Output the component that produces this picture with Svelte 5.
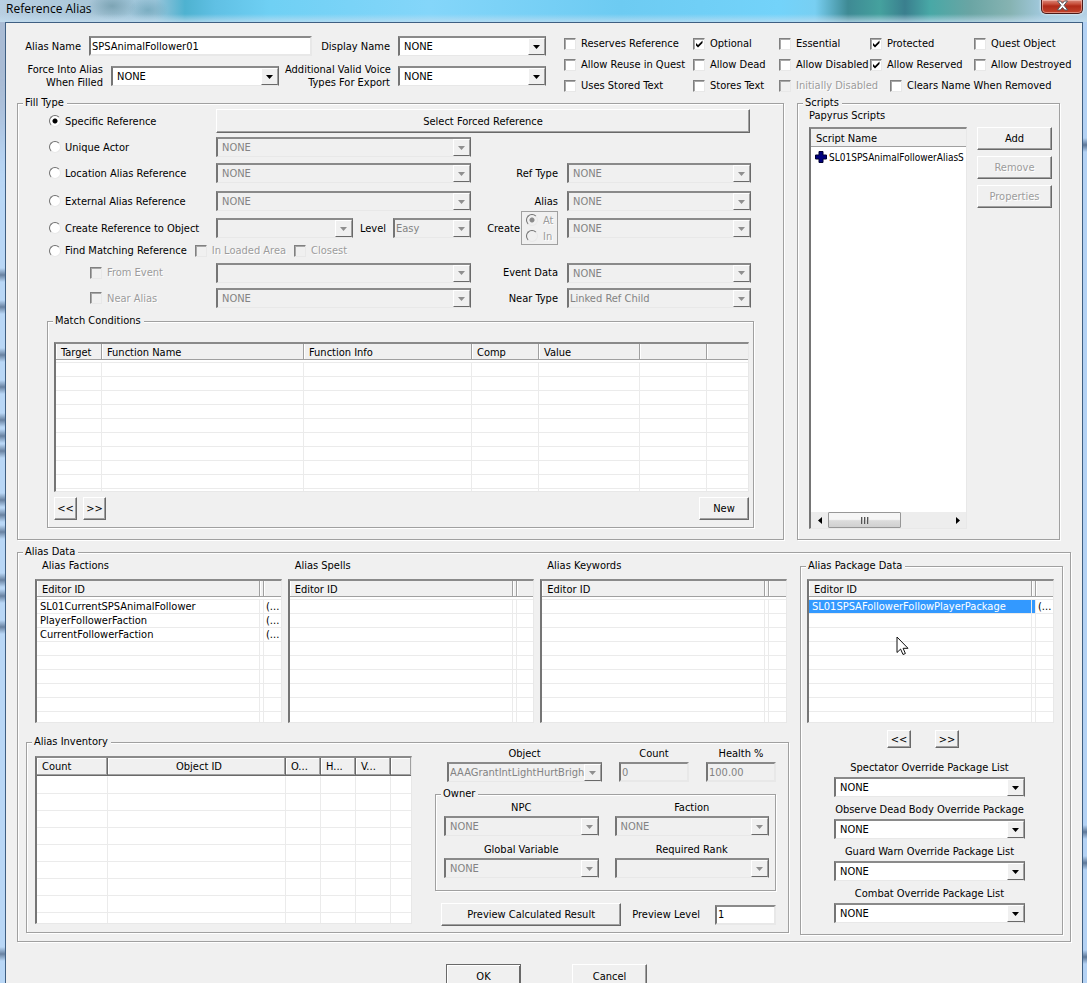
<script>
  const topChecks = [
    ['Reserves Reference', false], ['Optional', true], ['Essential', false], ['Protected', true], ['Quest Object', false],
    ['Allow Reuse in Quest', false], ['Allow Dead', false], ['Allow Disabled', false], ['Allow Reserved', true], ['Allow Destroyed', false],
    ['Uses Stored Text', false], ['Stores Text', false], ['Initially Disabled', false, true], ['Clears Name When Removed', false]
  ];

  const matchCols = [
    { w: 46, label: 'Target' }, { w: 202, label: 'Function Name' }, { w: 168, label: 'Function Info' },
    { w: 67, label: 'Comp' }, { w: 101, label: 'Value' }, { w: 67, label: '' }, { label: '' }
  ];
  const editorCols = [{ w: 223, label: 'Editor ID' }, { w: 4, label: '' }, { label: '' }];
  const inventoryCols = [
    { w: 71, label: 'Count' }, { w: 178, label: 'Object ID', center: true }, { w: 35, label: 'O...' },
    { w: 35, label: 'H...' }, { w: 35, label: 'V...' }, { label: '' }
  ];
  const factions = [
    ['SL01CurrentSPSAnimalFollower', '', '(...'],
    ['PlayerFollowerFaction', '', '(...'],
    ['CurrentFollowerFaction', '', '(...']
  ];
  const packages = [['SL01SPSAFollowerFollowPlayerPackage', '', '(...']];
  const overrides = [
    'Spectator Override Package List', 'Observe Dead Body Override Package',
    'Guard Warn Override Package List', 'Combat Override Package List'
  ];

  // Dark smudges showing through the glass frame, by distance from the title bar.
  function glass(spots) {
    return spots
      .map((y) => `linear-gradient(transparent ${y - 7}px, rgba(64,88,120,.75) ${y}px, transparent ${y + 7}px)`)
      .join(',');
  }
  const leftGlass = glass([253, 285, 333, 365, 398, 414, 429, 478, 493, 510, 558, 574, 605, 932]);
  const rightGlass = glass([123, 810, 841, 935]);

  let fill = $state('specific');
</script>

{#snippet combo(label, value, disabled = false, tight = false)}
  <span class="combo" class:disabled class:tight>
    <select aria-label={label} {disabled}><option>{value}</option></select>
    <span class="arrow"><svg width="7" height="4" viewBox="0 0 7 4"><path d="M0 0h7L3.5 4z" /></svg></span>
  </span>
{/snippet}

{#snippet check(label, checked = false, disabled = false)}
  <label class="check" class:disabled><input type="checkbox" {checked} {disabled} /><span>{label}</span></label>
{/snippet}

{#snippet option(value, label)}
  <label class="check radio"><input type="radio" name="fill" {value} bind:group={fill} /><span>{label}</span></label>
{/snippet}

{#snippet grid(name, cols, rows, count, selected = -1)}
  <table aria-label={name}>
    <colgroup>{#each cols as c}<col style={c.w ? `width:${c.w}px` : ''} />{/each}</colgroup>
    <thead><tr>{#each cols as c}<th class:center={c.center}><span>{c.label}</span></th>{/each}</tr></thead>
    <tbody>
      {#each Array(count) as _, r}
        <tr class:selected={r === selected}>{#each cols as _c, i}<td>{rows[r]?.[i] ?? ''}</td>{/each}</tr>
      {/each}
    </tbody>
  </table>
{/snippet}

<div class="window">
  <header>
    <h1>Reference Alias</h1>
    <button class="close" aria-label="Close">
      <svg width="13" height="11" viewBox="0 0 13 11"><path d="M1.5 1h3l2 2.300L8.500 1h3L8 5.300 11.700 10h-3L6.500 7.500 4.300 10h-3L5 5.300z" fill="#fff" stroke="#54595f" stroke-width="1" /></svg>
    </button>
  </header>
  <div class="edge left" style:background-image={leftGlass}></div>

  <main>
    <section class="top">
      <div class="names">
        <div class="row">
          <label class="w64" for="alias-name">Alias Name</label>
          <input id="alias-name" class="text grow" value="SPSAnimalFollower01" />
          <span class="cap w72">Display Name</span>
          <div class="w148">{@render combo('Display Name', 'NONE')}</div>
        </div>
        <div class="row">
          <span class="cap w86">Force Into Alias<br />When Filled</span>
          <div class="grow">{@render combo('Force Into Alias When Filled', 'NONE')}</div>
          <span class="cap w105">Additional Valid Voice<br />Types For Export</span>
          <div class="w148">{@render combo('Additional Valid Voice Types For Export', 'NONE')}</div>
        </div>
      </div>
      <div class="checks">
        {#each topChecks as [label, on, off]}{@render check(label, on, off)}{/each}
      </div>
    </section>

    <div class="upper">
      <fieldset>
        <legend>Fill Type</legend>
        <div class="fill">
          {@render option('specific', 'Specific Reference')}
          <button class="btn wide">Select Forced Reference</button>

          {@render option('unique', 'Unique Actor')}
          {@render combo('Unique Actor', 'NONE', true)}
          <span></span><span></span>

          {@render option('location', 'Location Alias Reference')}
          {@render combo('Location Alias Reference', 'NONE', true)}
          <span class="cap">Ref Type</span>
          {@render combo('Ref Type', 'NONE', true)}

          {@render option('external', 'External Alias Reference')}
          {@render combo('External Alias Reference', 'NONE', true)}
          <span class="cap">Alias</span>
          {@render combo('Alias', 'NONE', true)}

          {@render option('create', 'Create Reference to Object')}
          <div class="object">
            {@render combo('Object', '', true)}
            <span>Level</span>
            {@render combo('Level', 'Easy', true, true)}
          </div>
          <div class="create">
            <span>Create</span>
            <div class="box">
              <label class="check disabled"><input type="radio" name="create" checked disabled /><span>At</span></label>
              <label class="check disabled"><input type="radio" name="create" disabled /><span>In</span></label>
            </div>
          </div>
          {@render combo('Create', 'NONE', true)}

          <div class="find">
            {@render option('find', 'Find Matching Reference')}
            {@render check('In Loaded Area', false, true)}
            {@render check('Closest', false, true)}
          </div>

          <div class="sub">{@render check('From Event', false, true)}</div>
          {@render combo('From Event', '', true)}
          <span class="cap">Event Data</span>
          {@render combo('Event Data', 'NONE', true)}

          <div class="sub">{@render check('Near Alias', false, true)}</div>
          {@render combo('Near Alias', 'NONE', true)}
          <span class="cap">Near Type</span>
          {@render combo('Near Type', 'Linked Ref Child', true, true)}
        </div>

        <fieldset class="match">
          <legend>Match Conditions</legend>
          <div class="list h150">{@render grid('Match Conditions', matchCols, [], 10)}</div>
          <div class="pager">
            <button class="btn small">&lt;&lt;</button>
            <button class="btn small">&gt;&gt;</button>
            <button class="btn new">New</button>
          </div>
        </fieldset>
      </fieldset>

      <fieldset class="scripts">
        <legend>Scripts</legend>
        <p>Papyrus Scripts</p>
        <div class="split">
          <div class="list papyrus">
            <div class="colhead">Script Name</div>
            <div class="script">
              <svg width="12" height="12" viewBox="0 0 12 12"><path d="M4 .5h4V4h3.500v4H8v3.500H4V8H.5V4H4z" fill="#00007c" stroke="#000030" /></svg>
              <span>SL01SPSAnimalFollowerAliasS</span>
            </div>
            <div class="scroll">
              <button aria-label="Scroll left"><svg width="4" height="7" viewBox="0 0 4 7"><path d="M4 0v7L0 3.500z" /></svg></button>
              <div class="thumb"><i></i><i></i><i></i></div>
              <button aria-label="Scroll right"><svg width="4" height="7" viewBox="0 0 4 7"><path d="M0 0v7l4-3.500z" /></svg></button>
            </div>
          </div>
          <div class="actions">
            <button class="btn">Add</button>
            <button class="btn" disabled>Remove</button>
            <button class="btn" disabled>Properties</button>
          </div>
        </div>
      </fieldset>
    </div>

    <fieldset class="data">
      <legend>Alias Data</legend>
      <div class="datagrid">
        <div>
          <div class="lists">
            <div><p>Alias Factions</p><div class="list h144">{@render grid('Alias Factions', editorCols, factions, 9)}</div></div>
            <div><p>Alias Spells</p><div class="list h144">{@render grid('Alias Spells', editorCols, [], 9)}</div></div>
            <div><p>Alias Keywords</p><div class="list h144">{@render grid('Alias Keywords', editorCols, [], 9)}</div></div>
          </div>

          <fieldset class="inventory">
            <legend>Alias Inventory</legend>
            <div class="invgrid">
              <div class="list raised">{@render grid('Alias Inventory', inventoryCols, [], 9)}</div>
              <div>
                <div class="item">
                  <div class="field grow"><span>Object</span>{@render combo('Object', 'AAAGrantIntLightHurtBright', true, true)}</div>
                  <div class="field w70"><label for="count">Count</label><input id="count" class="text" value="0" disabled /></div>
                  <div class="field w70"><label for="health">Health %</label><input id="health" class="text" value="100.00" disabled /></div>
                </div>
                <fieldset class="owner">
                  <legend>Owner</legend>
                  <div class="owners">
                    <div class="field"><span>NPC</span>{@render combo('NPC', 'NONE', true)}</div>
                    <div class="field"><span>Faction</span>{@render combo('Faction', 'NONE', true)}</div>
                    <div class="field"><span>Global Variable</span>{@render combo('Global Variable', 'NONE', true)}</div>
                    <div class="field"><span>Required Rank</span>{@render combo('Required Rank', '', true)}</div>
                  </div>
                </fieldset>
                <div class="preview">
                  <button class="btn grow">Preview Calculated Result</button>
                  <label for="level">Preview Level</label>
                  <input id="level" class="text" value="1" />
                </div>
              </div>
            </div>
          </fieldset>
        </div>

        <fieldset class="package">
          <legend>Alias Package Data</legend>
          <div class="list h144">{@render grid('Alias Package Data', editorCols, packages, 9, 0)}</div>
          <div class="moves">
            <button class="btn">&lt;&lt;</button>
            <button class="btn">&gt;&gt;</button>
          </div>
          {#each overrides as name}
            <div class="field override"><span>{name}</span>{@render combo(name, 'NONE')}</div>
          {/each}
          <svg class="pointer" width="13" height="20" viewBox="0 0 13 20"><path d="M1 1v15.500l3.600-3.400 2.400 5.400 2.400-1-2.300-5.200h4.900z" fill="#fff" stroke="#111" /></svg>
        </fieldset>
      </div>
    </fieldset>

    <footer>
      <button class="btn default">OK</button>
      <button class="btn">Cancel</button>
    </footer>
  </main>

  <div class="edge right" style:background-image={rightGlass}></div>
</div>

<style>
  :global(body) { margin: 0; overflow: hidden; }
  .window, .window :is(button, input, select) { font: 11px/13px "DejaVu Sans Condensed", "DejaVu Sans", sans-serif; color: #000; }
  .window * { box-sizing: border-box; }
  .window {
    display: grid;
    grid-template: 22px 1fr / 5px minmax(0, 1fr) 4px;
    height: 100vh;
    overflow: hidden;
    background: #bcdcf8;
  }
  header {
    grid-column: 1 / -1;
    display: flex;
    justify-content: space-between;
    align-items: flex-start;
    padding: 0 4px 0 6px;
    background:
      linear-gradient(transparent 14px, rgba(196, 222, 240, .75) 22px),
      radial-gradient(ellipse 24px 14px at 112px 6px, rgba(108, 150, 165, .7), transparent),
      radial-gradient(ellipse 20px 12px at 148px 10px, rgba(90, 150, 170, .5), transparent),
      linear-gradient(90deg, #b9cfe2 0, #a9c6d8 90px, #9bc5da 155px, #4eb2d0 185px, #60c0e4 215px, #6fd0f4 270px, #84d6fa 430px, #6dcbf2 620px, #73d3fa 780px, #78cff2 815px, #3e8a94 848px, #45a19e 880px, #3a7f8e 905px, #48a8a6 930px, #6aa5a4 970px, #86b3b2 1010px, #9fc7da 1040px, #b4d0e4 100%);
  }
  h1 { margin: 2px 0 0; font: 12px/14px "Open Sans", sans-serif; }
  .window .close {
    display: flex;
    justify-content: center;
    width: 42px;
    height: 14px;
    padding: 0;
    border: 1px solid #4b1a18;
    border-top: 0;
    border-radius: 0 0 5px 5px;
    background: linear-gradient(#d98a7c 0, #c8503c 4px, #b02a18 6px, #c2442c 13px);
    box-shadow: inset 0 0 0 1px rgba(255, 210, 200, .5), 0 0 2px 1px rgba(255, 255, 255, .5);
  }
  .close svg { flex: none; }
  .left { background-color: #bcdcfc; box-shadow: inset 0 150px 60px -40px #a9bbd4; }
  .right { background-color: #b4d2f4; }
  main {
    min-width: 0;
    padding: 0 11px;
    background: #f0f0f0;
    border: 1px solid #3f5f82;
    border-bottom: 0;
    overflow: hidden;
  }

  p { margin: 0; line-height: 14px; }
  .row, .top, .pager, .preview, .item, .find, .object, .create, .moves, footer { display: flex; }
  .grow { flex: 1; min-width: 0; }
  .w64 { width: 64px; }
  .w70 { width: 70px; }
  .w72 { width: 72px; }
  .w86 { width: 86px; }
  .w105 { width: 105px; }
  .w148 { width: 148px; }
  .cap, .w64 { text-align: right; white-space: nowrap; }

  /* controls */
  .btn {
    height: 23px;
    padding: 0 4px;
    background: #f0f0f0;
    border: 1px solid;
    border-color: #fff #696969 #696969 #fff;
    box-shadow: inset -1px -1px #a0a0a0;
    border-radius: 0;
    white-space: nowrap;
  }
  .window .btn:disabled { color: #9c9c9c; text-shadow: 1px 1px #fff; }
  .text, .combo, .list {
    border: 2px solid;
    border-color: #8a8a8a #e8e8e8 #e8e8e8 #757575;
    background: #fff;
  }
  .text { height: 20px; padding: 0 1px; border-radius: 0; }
  .window .text:disabled { background: #f0f0f0; color: #838383; }
  .combo { display: grid; grid-template-columns: minmax(0, 1fr) 17px; height: 20px; min-width: 0; border-bottom-width: 1px; border-right: 1px solid #696969; }
  .combo select {
    grid-area: 1 / 1 / 2 / 3;
    width: 100%;
    padding: 0 17px 0 4px;
    border: 0;
    border-radius: 0;
    appearance: none;
    background: transparent;
    opacity: 1;
  }
  .combo.tight select { padding-left: 1px; }
  .arrow {
    grid-area: 1 / 2;
    display: grid;
    place-items: center;
    border: 1px solid;
    border-color: #fff #a0a0a0 #696969 #fff;
    background: #f0f0f0;
    pointer-events: none;
  }
  .combo.disabled { background: #f0f0f0; }
  .window .combo.disabled select { color: #838383; }
  .disabled .arrow path { fill: #8f8f8f; }

  .check { display: flex; align-items: center; gap: 5px; white-space: nowrap; }
  .radio { gap: 4px; }
  .check input { flex: none; appearance: none; margin: 0; width: 12px; height: 12px; background: #fff center no-repeat; }
  .check.disabled span { color: #9c9c9c; text-shadow: 1px 1px #fff; }
  input[type='checkbox'] { border: 1px solid; border-color: #808080 #e8e8e8 #e8e8e8 #808080; box-shadow: inset 1px 1px #a8a8a8; }
  input[type='checkbox']:disabled { background-color: #f0f0f0; }
  input[type='checkbox']:checked { background-image: url("data:image/svg+xml,%3Csvg xmlns='http://www.w3.org/2000/svg' width='8' height='8'%3E%3Cpath d='M1 3v2.500L3 7.500 7.500 3V.5L3 5z'/%3E%3C/svg%3E"); }
  input[type='radio'] { border: 1px solid; border-color: #707070 #e8e8e8 #e8e8e8 #707070; border-radius: 50%; }
  input[type='radio']:checked { background-image: radial-gradient(circle, #000 0 2px, transparent 3px); }
  input[type='radio']:disabled { background-color: #f0f0f0; }
  input[type='radio']:checked:disabled { background-image: radial-gradient(circle, #8a8a8a 0 2px, transparent 3px); }

  /* group boxes: --inset is the left padding, which the legend backs out of */
  fieldset {
    --inset: 0px;
    min-width: 0;
    margin: 0;
    padding: 0 0 0 var(--inset);
    border: 1px solid #a0a0a0;
    box-shadow: 1px 1px #fff, inset 1px 1px #fff;
  }
  legend { height: 10px; margin-left: calc(5px - var(--inset)); padding: 0 3px 0 2px; line-height: 10px; background: #f0f0f0; }

  /* lists */
  .list { overflow: hidden; border-right-width: 1px; border-bottom-width: 1px; }
  .h150 { height: 150px; }
  .h144 { height: 144px; }
  table { width: 100%; table-layout: fixed; border-spacing: 0; }
  th { height: 18px; padding: 0; font-weight: normal; text-align: left; vertical-align: top; }
  th span { display: block; height: 16px; padding: 3px 0 0 5px; line-height: 12px; border-right: 1px solid #a0a0a0; border-bottom: 1px solid #a0a0a0; background: #f0f0f0; overflow: hidden; white-space: nowrap; box-shadow: inset 1px 0 #fff; }
  th span:empty { padding: 0; }
  th:last-child span, td:last-child { border-right: 0; }
  th.center { text-align: center; }
  td { height: 14px; padding: 0 0 0 3px; line-height: 13px; border-top: 1px solid #ebebeb; border-right: 1px solid #ebebeb; white-space: nowrap; overflow: hidden; }
  td:empty { padding: 0; }
  td:last-child { padding: 0 0 0 2px; }
  .selected td:not(:last-child) { background: #3399ff; color: #fff; }
  .raised th span { height: 18px; padding-top: 3px; border-right-color: #696969; border-bottom-color: #696969; box-shadow: inset -1px -1px #a0a0a0, inset 1px 1px #fff; }
  .raised td { height: 17px; }
  .raised tbody tr:first-child td { border-top-color: #fff; }

  /* top */
  .top { height: 75px; gap: 18px; }
  .names { flex: 1; min-width: 0; display: grid; align-content: start; gap: 10px; padding-top: 13px; }
  .row { height: 20px; align-items: center; gap: 8px; }
  .row .w72, .row .w105 { margin-left: -2px; }
  .checks { display: grid; grid-template: repeat(3, 21px) / 129px 86px 91px 104px 97px; padding-top: 10px; }
  .checks > :global(:last-child) { grid-column: 4 / 6; padding-left: 20px; }

  /* fill type */
  .upper { display: grid; grid-template-columns: minmax(0, 1fr) 263px; gap: 13px; padding-right: 11px; }
  .upper > fieldset { padding-bottom: 11px; }
  .fill {
    display: grid;
    grid-template: 26px 26px 26px 30px 24px 21px 23px 28px / 167px minmax(0, 1fr) 96px 184px;
    align-items: center;
    padding: 0 32px 0 31px;
  }
  .fill .cap { padding-right: 9px; }
  .wide { grid-column: 2 / 5; margin-right: 1px; height: 24px; }
  .object { align-items: center; gap: 7px; }
  .object .combo:first-child { flex: 1; }
  .object .combo:last-child { width: 78px; }
  .create { align-items: center; justify-content: flex-end; gap: 1px; padding-right: 9px; }
  .box { width: 37px; height: 34px; display: grid; padding: 0 4px; border: 1px solid #a0a0a0; }
  .find { grid-column: 1 / -1; gap: 8px; }
  .sub { padding-left: 41px; }
  .match { --inset: 6px; margin: 4px 29px 0; padding-top: 16px; padding-right: 4px; padding-bottom: 7px; }
  .pager { gap: 6px; margin-top: 5px; }
  .small { width: 23px; padding: 0; }
  .new { width: 50px; margin-left: auto; }

  /* scripts */
  .upper .scripts { --inset: 11px; padding-right: 7px; padding-bottom: 10px; }
  .scripts p { margin: 1px 0 4px; }
  .split { display: grid; grid-template-columns: minmax(0, 1fr) 75px; gap: 10px; height: 402px; }
  .papyrus { display: flex; flex-direction: column; }
  .colhead { height: 18px; padding: 3px 5px 0; background: #f0f0f0; border-bottom: 1px solid #a0a0a0; }
  .script { flex: 1; display: flex; align-items: flex-start; gap: 2px; padding: 4px 0 0 4px; font-size: 10px; white-space: nowrap; }
  .script svg { flex: none; }
  .scroll { display: flex; height: 16px; background: #ededed; }
  .scroll button { display: grid; place-items: center; width: 17px; height: 16px; padding: 0; border: 0; background: none; }
  .scroll button:last-child { margin-left: auto; }
  .thumb { display: flex; justify-content: center; align-items: center; gap: 2px; width: 73px; border: 1px solid #979797; border-radius: 1px; background: linear-gradient(#f5f5f5 0 45%, #dcdcdc 55%, #d0d0d0); }
  .thumb i { width: 1px; height: 7px; background: #555; box-shadow: 1px 0 #bbb; }
  .actions { display: grid; align-content: start; gap: 6px; }

  /* alias data */
  .data { margin: 7px 0 0; padding-bottom: 6px; }
  .datagrid { display: grid; grid-template-columns: minmax(0, 1fr) 263px; gap: 11px; align-items: start; padding-right: 7px; }
  .lists { display: grid; grid-template-columns: repeat(3, minmax(0, 1fr)); gap: 6px; padding: 2px 2px 0 17px; }
  .lists p { margin-bottom: 6px; padding-left: 7px; }
  .inventory { --inset: 8px; margin: 14px 0 0 8px; padding-right: 12px; padding-bottom: 6px; }
  .invgrid { display: grid; grid-template-columns: minmax(0, 1fr) 341px; gap: 23px; }
  .raised { height: 168px; margin-top: 9px; }
  .field { display: grid; grid-template-columns: minmax(0, 1fr); gap: 1px; text-align: center; line-height: 14px; }
  .field .text { width: 100%; }
  .item { gap: 17px; padding-left: 12px; }
  .owner { --inset: 8px; margin-top: 7px; padding-top: 2px; padding-right: 6px; padding-bottom: 12px; }
  .owners { display: grid; grid-template-columns: 1fr 1fr; gap: 7px 16px; }
  .preview { margin-top: 12px; align-items: center; gap: 11px; padding-left: 6px; }
  .preview .text { width: 61px; margin-left: 4px; }
  .package { --inset: 6px; position: relative; margin-top: 4px; padding-top: 8px; padding-right: 8px; padding-bottom: 11px; }
  .moves { gap: 24px; margin: 7px 0 13px; padding-left: 80px; }
  .moves .btn { width: 24px; height: 18px; padding: 0; }
  .override { gap: 2px; margin: 0 29px 6px 27px; white-space: nowrap; }
  .override:nth-last-child(2) { margin-bottom: 0; }
  .pointer { position: absolute; left: 95px; top: 65px; }

  footer { gap: 51px; margin-top: 22px; padding-left: 429px; }
  footer .btn { width: 75px; height: 24px; }
  .default { border-color: #696969; box-shadow: inset 1px 1px #fff, inset -1px -1px #696969; }
</style>
